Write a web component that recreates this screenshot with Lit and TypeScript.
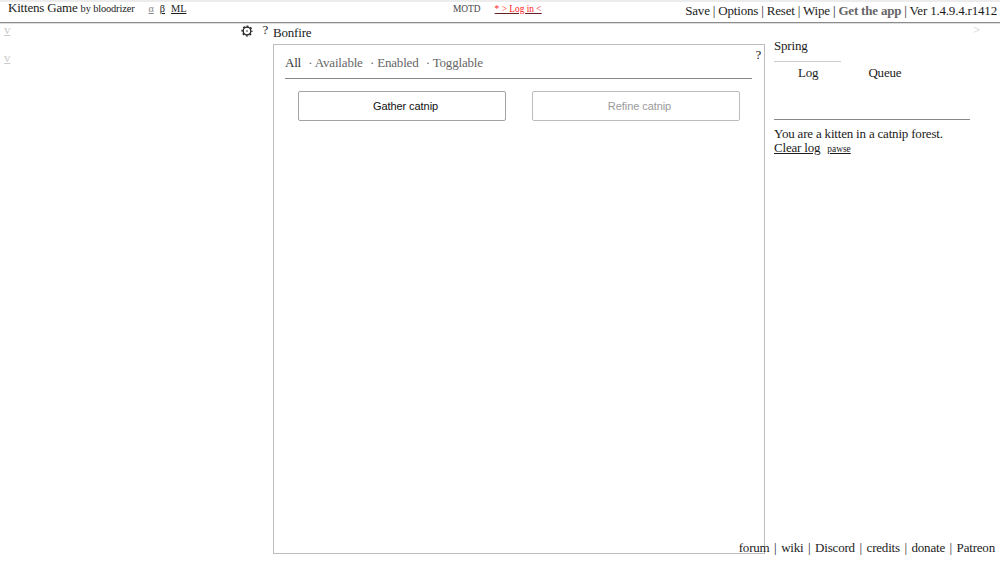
import { LitElement, html, css } from "lit";
import { customElement, state } from "lit/decorators.js";

@customElement("app-root")
class AppRoot extends LitElement {
  @state() private filter = "All";

  static styles = css`
    :host { display: block; height: 563px; overflow: hidden; position: relative; background: #fff; color: #1c1c1c;
      font: 13px/14px "Liberation Serif", serif; letter-spacing: -0.19px; white-space: nowrap; }
    * { box-sizing: border-box; }
    a { color: inherit; cursor: pointer; }
    .top { height: 23px; display: flex; border-top: 2px solid #ececec; border-bottom: 1px solid #8c8c8c; box-shadow: 0 1px 0 #dedede; }
    .brand { width: 453px; padding-left: 8px; margin-top: -1px; }
    .by { font-size: 10.4px; letter-spacing: -0.14px; margin-left: 3px; }
    .link { font-size: 10.4px; letter-spacing: -0.1px; text-decoration: underline; }
    .alpha { color: #888; margin-left: 14px; }
    .beta { margin: 0 6px 0 6px; }
    .motd { font-size: 9.4px; letter-spacing: 0; flex: 1; color: #444; }
    .login { color: #f22; text-decoration: underline #622; margin-left: 14px; }
    .menu { padding: 2px 3px 0 0; }
    .app { color: #666; font-weight: bold; }
    .main { display: flex; height: 540px; }
    .left { width: 273px; display: flex; justify-content: space-between; padding: 0 5px 0 4px; }
    .toggles { display: flex; flex-direction: column; gap: 14px; color: #ccc; text-decoration: underline; }
    .tools { display: flex; gap: 9px; }
    .gear { width: 12px; height: 12px; margin-top: 2px; }
    .mid { width: 492px; padding-top: 3px; }
    .panel { margin-top: 4px; height: 510px; border: 1px solid #bdbdbd; padding: 11px 12px 0 11px; position: relative; }
    .help { position: absolute; right: 3px; top: 3px; }
    .filters { display: flex; gap: 7.3px; height: 23px; border-bottom: 1px solid #888; color: #666; }
    .on { color: #333; }
    .buttons { display: flex; gap: 26px; padding: 12px 0 0 13px; }
    .btn { width: 208px; height: 30px; border: 1px solid #a2a2a2; border-radius: 2px; display: grid; place-items: center;
      padding-left: 7px; font: 11px/12px "Liberation Sans", sans-serif; letter-spacing: -0.07px; color: #111; }
    .off { color: #999; border-color: #bcbcbc; }
    .right { flex: 1; padding: 0 30px 0 9px; }
    .collapse { text-align: right; color: #ccc; margin-right: -10px; height: 16px; }
    .season { width: 67px; height: 23px; border-bottom: 1px solid #ccc; }
    .tabs { display: flex; height: 58px; padding: 4px 0 0 24px; gap: 50px; border-bottom: 1px solid #888; margin-bottom: 7px; }
    .u { text-decoration: underline; }
    .pawse { font-size: 9.4px; letter-spacing: 0; margin-left: 7px; }
    .foot { position: absolute; right: 5px; bottom: 8px; display: flex; gap: 4.6px; }
  `;

  render() {
    const names = ["All", "Available", "Enabled", "Togglable"];
    const links = ["forum", "wiki", "Discord", "credits", "donate", "Patreon"];
    return html`
      <div class="top">
        <div class="brand">Kittens Game<span class="by">by bloodrizer</span><a class="link alpha">α</a><a class="link beta">β</a><a class="link">ML</a></div>
        <div class="motd">MOTD<a class="login">* &gt; Log in &lt;</a></div>
        <div class="menu"><a>Save</a> | <a>Options</a> | <a>Reset</a> | <a>Wipe</a> | <a class="app">Get the app</a> | Ver 1.4.9.4.r1412</div>
      </div>
      <div class="main">
        <div class="left">
          <div class="toggles"><a>v</a><a>v</a></div>
          <div class="tools">
            <svg class="gear" viewBox="0 0 12 12" fill="none" stroke="#222">
              <circle cx="6" cy="6" r="3.8" stroke-width="1.3"></circle>
              <circle cx="6" cy="6" r="4.9" stroke-width="1.3" stroke-dasharray="1.9 1.948" stroke-dashoffset="1"></circle>
              <circle cx="6" cy="6" r=".8" fill="#222" stroke="none"></circle>
            </svg>
            <span>?</span>
          </div>
        </div>
        <div class="mid">
          <div>Bonfire</div>
          <div class="panel">
            <span class="help">?</span>
            <div class="filters">
              ${names.map((n, i) => html`<a class=${n === this.filter ? "on" : ""} @click=${() => (this.filter = n)}>${i ? "· " : ""}${n}</a>`)}
            </div>
            <div class="buttons"><div class="btn">Gather catnip</div><div class="btn off">Refine catnip</div></div>
          </div>
        </div>
        <div class="right">
          <div class="collapse">&gt;</div>
          <div class="season">Spring</div>
          <div class="tabs"><a>Log</a><a>Queue</a></div>
          <div>You are a kitten in a catnip forest.</div>
          <div><a class="u">Clear log</a><a class="u pawse">pawse</a></div>
        </div>
      </div>
      <div class="foot">${links.map((l, i) => html`${i ? html`<span>|</span>` : ""}<a>${l}</a>`)}</div>
    `;
  }
}
